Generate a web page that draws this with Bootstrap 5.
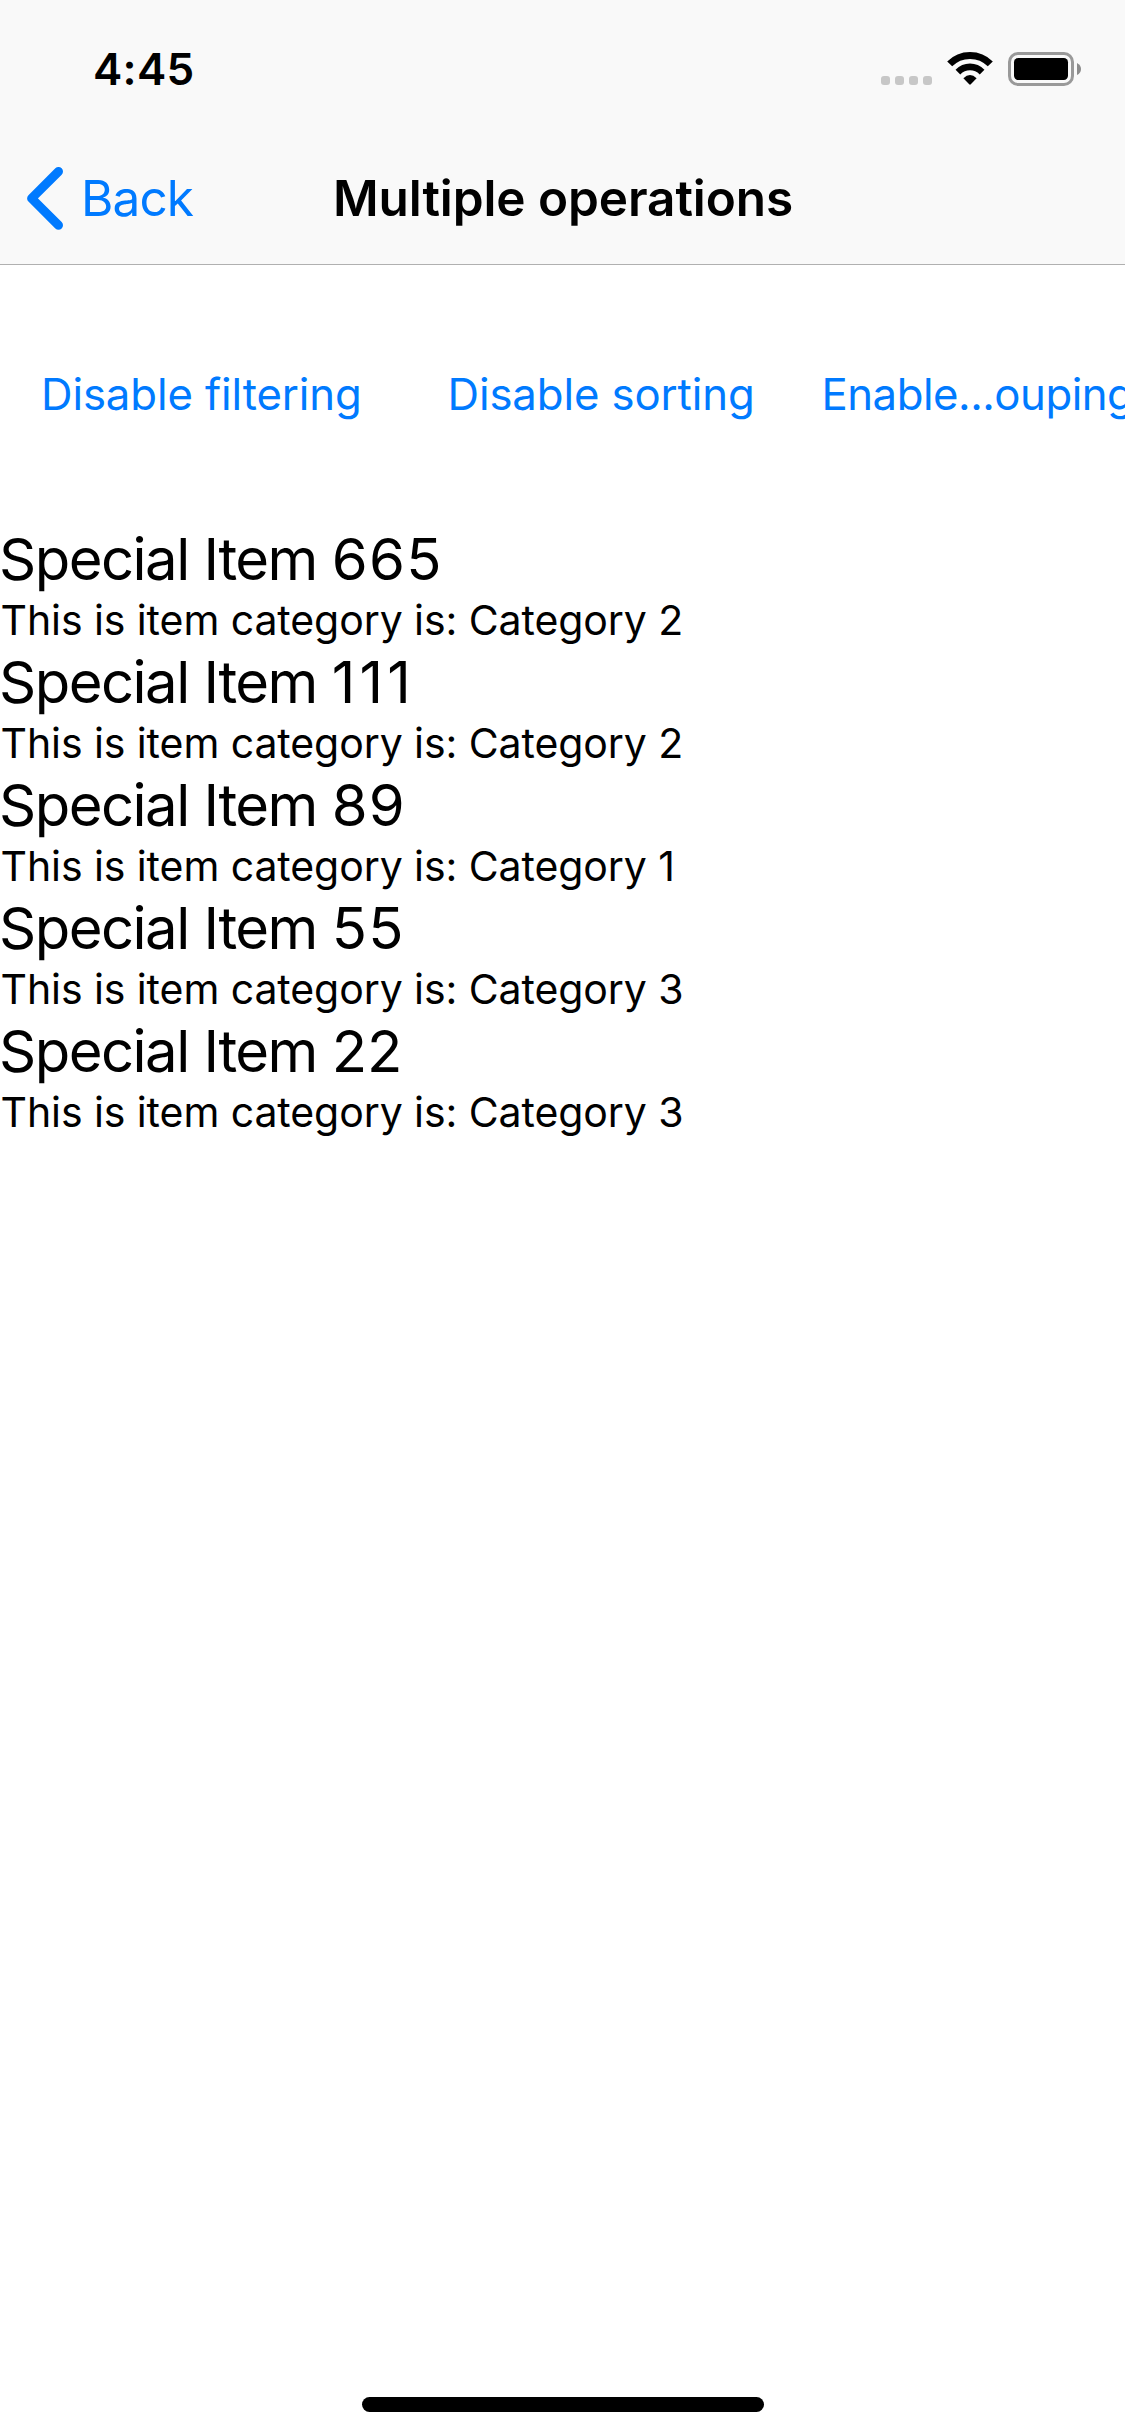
<!DOCTYPE html>
<html lang="en">
<head>
<meta charset="utf-8">
<meta name="viewport" content="width=device-width, initial-scale=1">
<title>Multiple operations</title>
<link href="https://cdn.jsdelivr.net/npm/bootstrap@5.3.0/dist/css/bootstrap.min.css" rel="stylesheet">
<style>
  body { font-family: Inter, "Liberation Sans", sans-serif; color: #000; background: #fff; }
  .screen { height: 2436px; }
  .top-area { height: 265px; background: #f9f9f9; border-bottom: 1px solid #b0b0b0; }
  .status-row { height: 132px; padding: 0 44px 0 93px; }
  .clock { font-size: 44px; font-weight: 600; line-height: 138px; letter-spacing: .3px; }
  .status-icons { width: 202px; height: 36px; margin-top: 51px; }
  .title-row { height: 132px; }
  .side { flex: 0 0 333px; }
  .back-link { color: #007aff; font-size: 49.5px; letter-spacing: -.9px; padding-left: 26px; line-height: 132px; }
  .back-link svg { width: 38px; height: 66px; margin-right: 17px; }
  .page-title { font-size: 49.5px; font-weight: 600; letter-spacing: -.08px; line-height: 132px; }
  .actions { height: 258px; padding: 2px 0 0 41px; }
  .action { --bs-btn-color: #007aff; --bs-btn-font-size: 43.7px; color: #007aff; font-size: 43.7px; line-height: 60px; letter-spacing: -.1px; flex: none; }
  .action-filter { width: 406.5px; }
  .action-sort { width: 374px; }
  .action-group { letter-spacing: -.48px; }
  .item-name { font-size: 58px; line-height: 72px; height: 72px; letter-spacing: -1.52px; margin-left: -1px; }
  .item-name span { letter-spacing: 1.3px; }
  .item-name .twos { letter-spacing: 0; }
  .item-name .ones { letter-spacing: 4.2px; }
  .item-note { font-size: 41px; line-height: 51px; height: 51px; letter-spacing: -.08px; padding-left: .5px; }
  .home-bar { width: 402px; height: 15px; margin-bottom: 24px; background: #000; }
</style>
</head>
<body>
<div class="screen d-flex flex-column overflow-hidden">
  <header class="top-area flex-shrink-0">
    <div class="status-row d-flex justify-content-between">
      <div class="clock">4:45</div>
      <svg class="status-icons" viewBox="879 51 202 36" aria-hidden="true">
        <g fill="#c7c7c7">
          <rect x="881" y="76" width="9" height="9" rx="3"/><rect x="895" y="76" width="9" height="9" rx="3"/>
          <rect x="909" y="76" width="9" height="9" rx="3"/><rect x="923" y="76" width="9" height="9" rx="3"/>
        </g>
        <g fill="none" stroke="#000">
          <path d="M949.7 63.9Q958 55.4 970 55.4T990.3 63.9" stroke-width="7"/>
          <path d="M957.9 72.1Q963 66.9 970 66.9T982.1 72.1" stroke-width="6.6"/>
        </g>
        <path d="M963.4 78.2Q970 72 976.6 78.2L970.8 84.3Q970 85.1 969.2 84.3Z" fill="#000"/>
        <rect x="1009.5" y="53.5" width="63" height="31" rx="8.5" fill="none" stroke="#999" stroke-width="3"/>
        <rect x="1014" y="58" width="54" height="22" rx="4.2"/>
        <path d="M1077 63Q1081 65 1081 69T1077 75Z" fill="#8c8c8c"/>
      </svg>
    </div>
    <nav class="title-row d-flex">
      <div class="side">
        <a href="#" class="back-link d-flex align-items-center text-decoration-none"><svg viewBox="0 0 38 66" aria-hidden="true"><path d="M32.5 6.5L5.6 33.4 32.5 60.3" fill="none" stroke="#007aff" stroke-width="9" stroke-linecap="round" stroke-linejoin="round"/></svg>Back</a>
      </div>
      <h1 class="page-title m-0 text-nowrap">Multiple operations</h1>
    </nav>
  </header>
  <div class="actions d-flex align-items-center flex-shrink-0 text-nowrap overflow-hidden">
    <button type="button" class="btn action action-filter p-0 border-0 text-start">Disable filtering</button>
    <button type="button" class="btn action action-sort p-0 border-0 text-start">Disable sorting</button>
    <button type="button" class="btn action action-group p-0 border-0 text-start">Enable...ouping</button>
  </div>
  <ul class="list-unstyled m-0 flex-grow-1">
    <li><div class="item-name">Special Item <span>665</span></div><div class="item-note">This is item category is: Category 2</div></li>
    <li><div class="item-name">Special Item <span class="ones">111</span></div><div class="item-note">This is item category is: Category 2</div></li>
    <li><div class="item-name">Special Item <span>89</span></div><div class="item-note">This is item category is: Category 1</div></li>
    <li><div class="item-name">Special Item <span>55</span></div><div class="item-note">This is item category is: Category 3</div></li>
    <li><div class="item-name">Special Item <span class="twos">22</span></div><div class="item-note">This is item category is: Category 3</div></li>
  </ul>
  <div class="home-bar rounded-pill mx-auto flex-shrink-0"></div>
</div>
<script src="https://cdn.jsdelivr.net/npm/bootstrap@5.3.0/dist/js/bootstrap.bundle.min.js"></script>
</body>
</html>
